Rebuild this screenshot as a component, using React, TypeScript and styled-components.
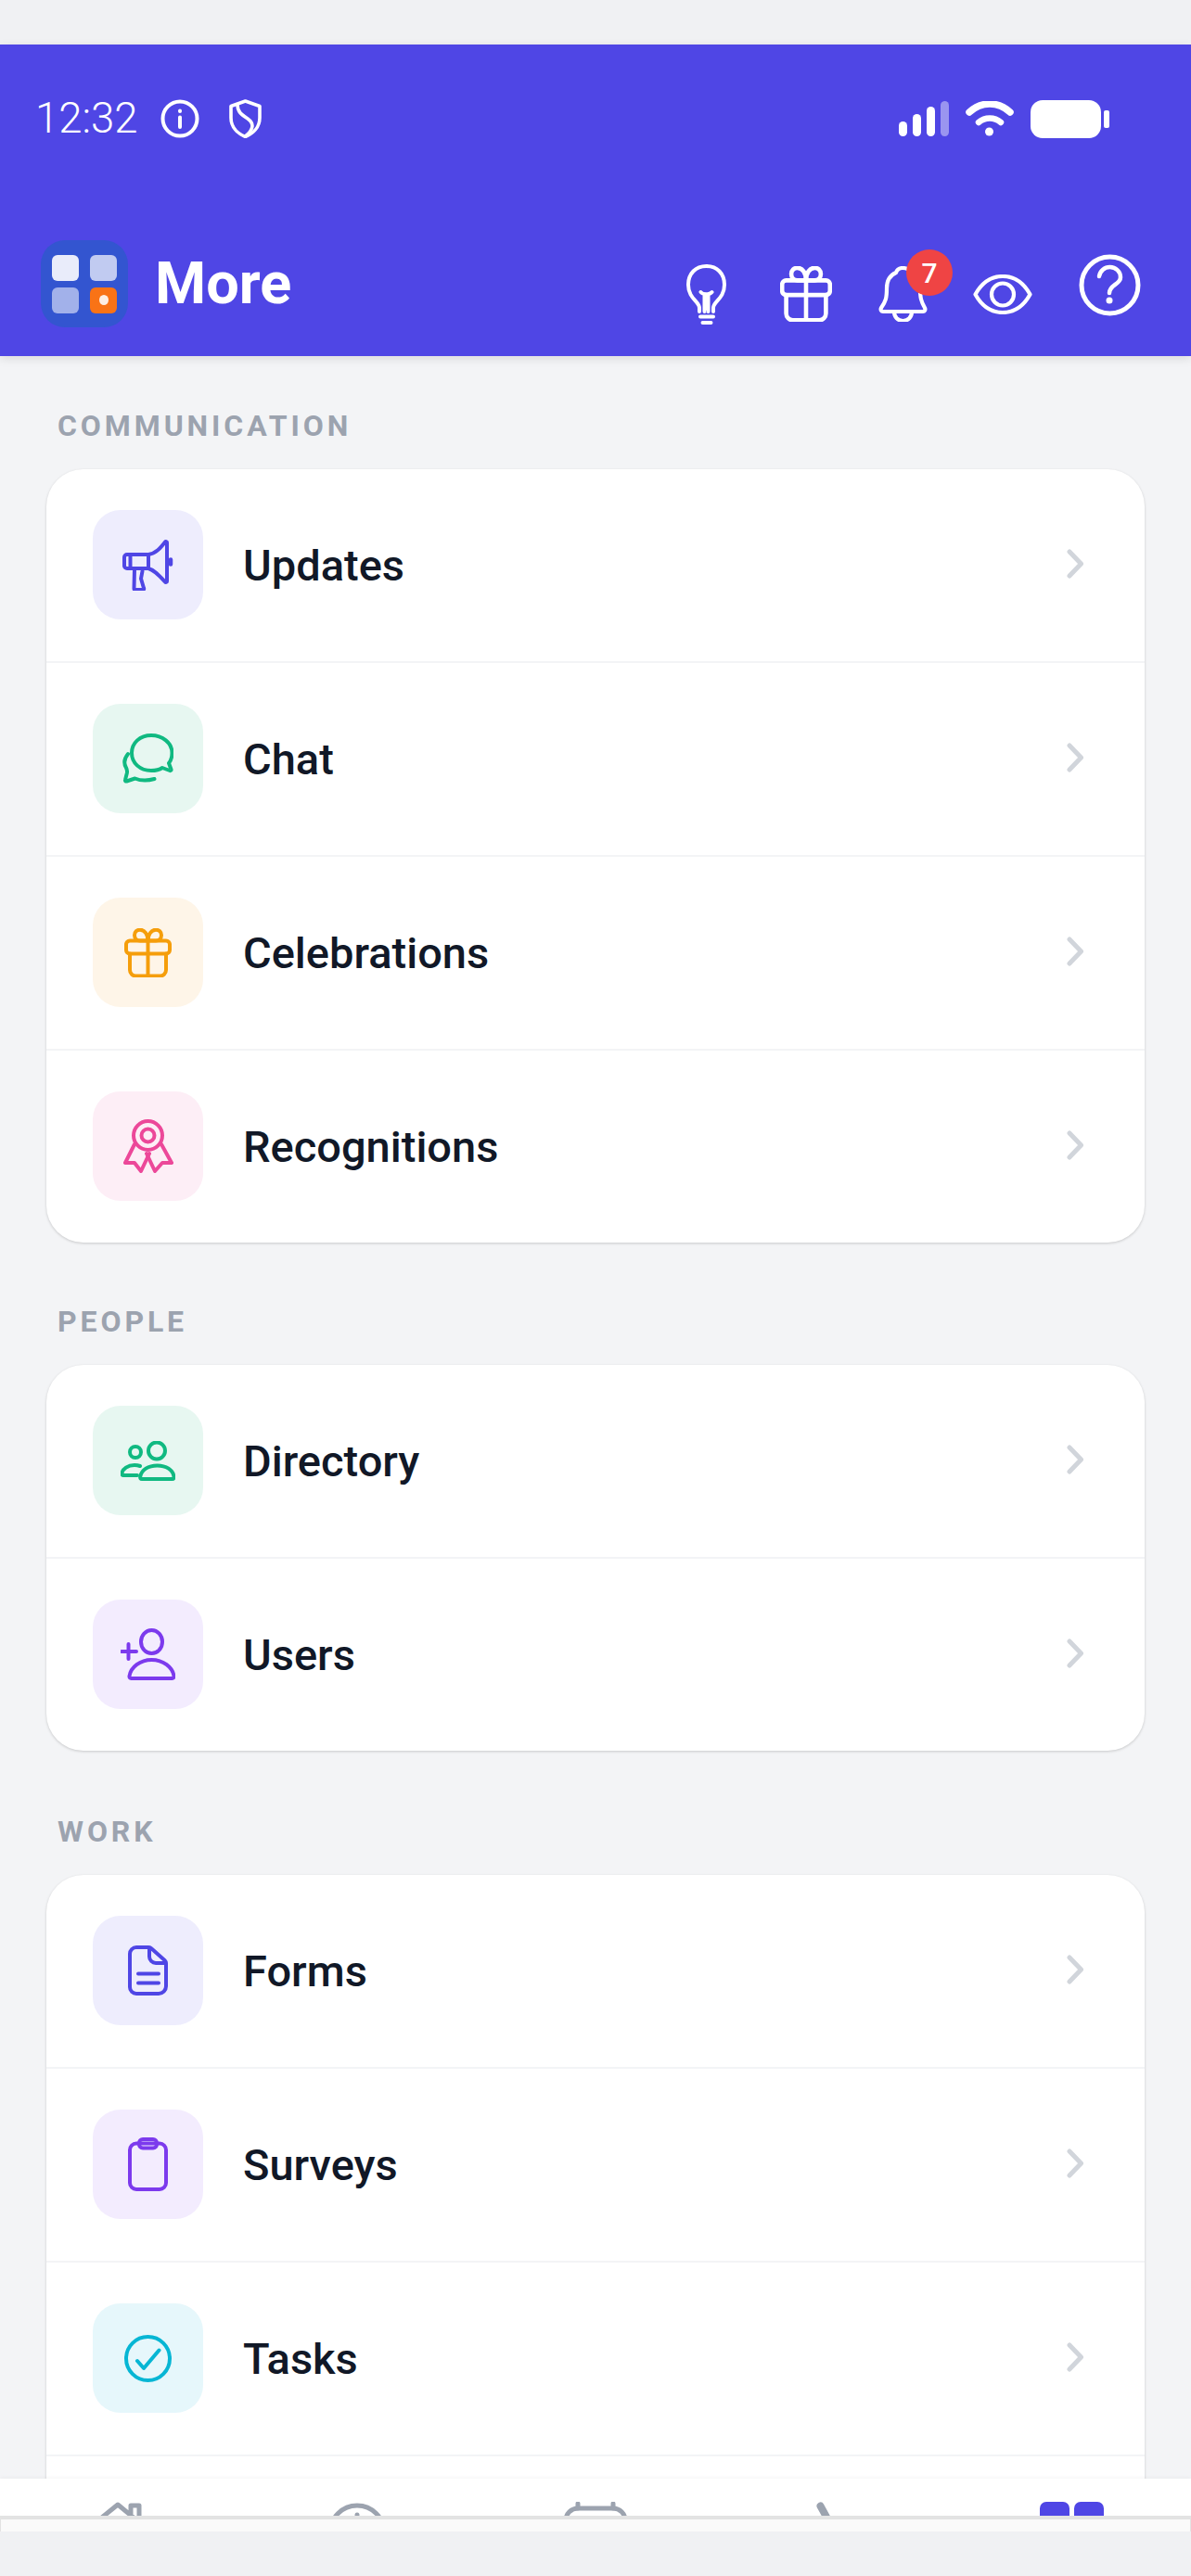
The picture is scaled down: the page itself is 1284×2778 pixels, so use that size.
import React from 'react';
import styled, {createGlobalStyle} from 'styled-components';

const Global = createGlobalStyle`
    * {
        box-sizing: border-box;
    }
    html, body {
        margin: 0;
        padding: 0;
        background: #f0f1f3;
        font-family: Roboto, "Liberation Sans", sans-serif;
    }
`

const Svg = styled.svg.attrs({fill: 'none', stroke: 'currentColor', strokeLinecap: 'round', strokeLinejoin: 'round'})`
    display: block;
    flex-shrink: 0;
`

type IconProps = { w: number; h: number; sw?: number };

const GiftIcon = ({w, h, sw = 4}: IconProps) => (
    <Svg width={w} height={h} viewBox="0 0 51 53" strokeWidth={sw} preserveAspectRatio="none">
        <rect x="2" y="13.5" width="47" height="14" rx="4"/>
        <path d="M6 27.5V45a6.5 6.5 0 0 0 6.5 6.5h26A6.5 6.5 0 0 0 45 45V27.5"/>
        <path d="M25.5 7v44.5"/>
        <path d="M25.5 13.5H17c-3.500 0-6-2.500-6-6s2.500-5.800 6-5.800c5 0 8.500 5 8.500 11.800z"/>
        <path d="M25.5 13.500H34c3.500 0 6-2.500 6-6s-2.500-5.800-6-5.800c-5 0-8.500 5-8.500 11.800z"/>
    </Svg>
);

const MegaphoneIcon = () => (
    <Svg width={55} height={55} viewBox="0 0 55 55" strokeWidth={4}>
        <path d="M28 16c8-1 13-7 18-13.500.6-.8 2-.4 2 .6v41.800c0 1-1.400 1.400-2 .6C40 39 35 33 28 31z"/>
        <path d="M5 16h23v15H5a3 3 0 0 1-3-3v-9a3 3 0 0 1 3-3zM8.500 16v15"/>
        <path d="M13 32l-.5 20.500c0 1 .6 1.500 1.500 1.500h8c1 0 1.500-.8 1-1.800L20 42l1.500-8"/>
        <path d="M1 21.500v5M52 21.500v5" strokeWidth={4.5}/>
    </Svg>
);

const ChatIcon = () => (
    <Svg width={55} height={54} viewBox="0 0 55 54" strokeWidth={4}>
        <path d="M31 2C19 2 10 10 10 21c0 11 9 19 21 19 5 0 9-1 12-3l8 3c1 .4 1.800-.4 1.500-1.300L50 32c2.500-3 3.500-7 3.500-11C53.500 10 43 2 31 2z"/>
        <path d="M6 22c-4 5-5 10-2 15 1 2 1.500 3 .8 6l-1.800 7c-.3 1 .5 1.800 1.500 1.500l9-3c6 2.500 14 2.500 21 .5"/>
    </Svg>
);

const RosetteIcon = () => (
    <Svg width={54} height={58} viewBox="0 0 54 58" strokeWidth={4}>
        <circle cx="26.500" cy="17.500" r="15.500"/>
        <circle cx="26.500" cy="17.500" r="7"/>
        <path d="M12 27L2 47h10l7 9 9-19"/>
        <path d="M41 27l11 20H42l-8 9-9-19"/>
    </Svg>
);

const PeopleIcon = () => (
    <Svg width={59} height={43} viewBox="0 0 59 43" strokeWidth={4}>
        <circle cx="39" cy="10.500" r="9"/>
        <circle cx="16" cy="12" r="6"/>
        <path d="M23 41c-1.500 0-2-1-1.800-2.500C22.500 31 30 26.500 39.500 26.500S56.500 31 57.500 38.500c.2 1.500-.3 2.500-1.800 2.500z"/>
        <path d="M21 27c-2-.7-4-1-6-1C8 26 2 30 1.500 35c-.2 1.400.3 2 1.500 2h15"/>
    </Svg>
);

const UserPlusIcon = () => (
    <Svg width={59} height={56} viewBox="0 0 59 56" strokeWidth={4}>
        <ellipse cx="33.500" cy="14.500" rx="11.500" ry="12.500"/>
        <path d="M11.500 54c-1.500 0-2.200-1-2-2.500C11 42 21 34 33.500 34S56 42 57.500 51.500c.2 1.500-.5 2.500-2 2.500z"/>
        <path d="M8.500 17v16M1 25h16"/>
    </Svg>
);

const DocIcon = () => (
    <Svg width={43} height={54} viewBox="0 0 43 54" strokeWidth={4}>
        <path d="M9 2h13c1.500 0 2.500.5 3.500 1.500L39.500 16c1 1 1.500 2 1.500 3.500V44a8 8 0 0 1-8 8H9a7 7 0 0 1-7-7V9a7 7 0 0 1 7-7z"/>
        <path d="M23 2.500V12a7 7 0 0 0 7 7h10.500"/>
        <path d="M11 30.500h22M11 40.500h22"/>
    </Svg>
);

const ClipboardIcon = () => (
    <Svg width={43} height={58} viewBox="0 0 43 58" strokeWidth={4}>
        <rect x="2" y="6.500" width="39" height="49.500" rx="7"/>
        <rect x="12" y="2" width="19" height="9.500" rx="4"/>
    </Svg>
);

const CheckCircleIcon = () => (
    <Svg width={51} height={51} viewBox="0 0 51 51" strokeWidth={4}>
        <circle cx="25.500" cy="25.500" r="23.500"/>
        <path d="M14 28l7 8 16.500-19.500"/>
    </Svg>
);

const Chevron = () => (
    <Svg width={18} height={32} viewBox="0 0 18 32" strokeWidth={5}>
        <path d="M3 3l12.500 13L3 29"/>
    </Svg>
);

const sections = [
    {
        title: 'COMMUNICATION',
        rows: [
            {label: 'Updates', bg: '#eeedfd', color: '#4f46e5', icon: <MegaphoneIcon/>},
            {label: 'Chat', bg: '#e7f7f1', color: '#10b981', icon: <ChatIcon/>},
            {label: 'Celebrations', bg: '#fef5e8', color: '#f59e0b', icon: <GiftIcon w={51} h={53}/>},
            {label: 'Recognitions', bg: '#fdeef6', color: '#ec4899', icon: <RosetteIcon/>},
        ],
    },
    {
        title: 'PEOPLE',
        rows: [
            {label: 'Directory', bg: '#e7f7f1', color: '#10b981', icon: <PeopleIcon/>},
            {label: 'Users', bg: '#f3ecfe', color: '#7c3aed', icon: <UserPlusIcon/>},
        ],
    },
    {
        title: 'WORK',
        rows: [
            {label: 'Forms', bg: '#eeedfd', color: '#4f46e5', icon: <DocIcon/>},
            {label: 'Surveys', bg: '#f3ecfe', color: '#7c3aed', icon: <ClipboardIcon/>},
            {label: 'Tasks', bg: '#e6f7fb', color: '#06b6d4', icon: <CheckCircleIcon/>},
        ],
    },
];

const App = () => {
    return (
        <Screen>
            <Global/>
            <TopGap/>
            <Header>
                <StatusBar>
                    <StatusLeft>
                        <Time>12:32</Time>
                        <Svg width={42} height={42} viewBox="0 0 42 42" strokeWidth={4}>
                            <circle cx="21" cy="21" r="18.500"/>
                            <path d="M21 19.500V30M21 12.500v.5"/>
                        </Svg>
                        <Svg width={35} height={42} viewBox="0 0 35 42" strokeWidth={3.6}>
                            <path d="M17.500 2L33 7.500V20c0 10-7 17-15.500 20.500C9 37 2 30 2 20V7.500z"/>
                            <path d="M9 6c0 8 5 11 11 15 7 5 7 11-2.500 19"/>
                        </Svg>
                    </StatusLeft>
                    <StatusRight>
                        <Signal>
                            <SignalBar $h={16}/>
                            <SignalBar $h={24}/>
                            <SignalBar $h={32}/>
                            <SignalBar $h={38} $dim/>
                        </Signal>
                        <Svg width={52} height={38} viewBox="0 0 52 38" strokeWidth={7.500}>
                            <path d="M4 12C17 0 35 0 48 12"/>
                            <path d="M14 23c7-6 17-6 24 0" strokeWidth={6.500}/>
                            <circle cx="25.500" cy="33" r="4.500" fill="currentColor" stroke="none"/>
                        </Svg>
                        <Battery>
                            <BatteryNub/>
                        </Battery>
                    </StatusRight>
                </StatusBar>
                <Toolbar>
                    <Logo>
                        <LogoSquare $bg="#e9ecfa"/>
                        <LogoSquare $bg="#c1cbf1"/>
                        <LogoSquare $bg="#a2b1ea"/>
                        <LogoSquare $bg="#f97316"><LogoDot/></LogoSquare>
                    </Logo>
                    <Title>More</Title>
                    <Actions>
                        <BulbSlot>
                            <Svg width={43} height={65} viewBox="0 0 43 65" strokeWidth={4}>
                                <path d="M14 51v-4C14 40 2 37 2 22 2 10 10 2 21.500 2S41 10 41 22c0 15-12 18-12 25v4"/>
                                <path d="M15.500 30c2 3 9.500 3 12 0M19.500 33v18M23.500 33v18"/>
                                <path d="M15 56.500h14M17.500 63h9" strokeWidth={4}/>
                            </Svg>
                        </BulbSlot>
                        <GiftIcon w={56} h={60} sw={4.2}/>
                        <BellSlot>
                            <Svg width={53} height={60} viewBox="0 0 53 60" strokeWidth={4.2}>
                                <path d="M26 2c-4 0-6 2-7 5C12 10 9 15 9 24c0 10-1 14-6 21-1 2 0 4 2 4h43c2 0 3-2 2-4-4-7-5-11-5-21 0-9-3-14-10-17-1-3-4-5-9-5z"/>
                                <path d="M17 49c0 6 4 10 9.500 10S36 55 36 49"/>
                            </Svg>
                            <Badge>7</Badge>
                        </BellSlot>
                        <Svg width={64} height={43} viewBox="0 0 64 43" strokeWidth={4.2}>
                            <path d="M2.500 21.500C10 8 20 2 32 2s22 6 29.500 19.500C54 35 44 41 32 41S10 35 2.500 21.500z"/>
                            <circle cx="32" cy="21.500" r="12"/>
                        </Svg>
                        <HelpSlot>
                            <Svg width={67} height={67} viewBox="0 0 67 67" strokeWidth={5}>
                                <circle cx="33.500" cy="33.500" r="30.500"/>
                                <path d="M22 24c1-6 6-10 11.500-10C40 14 45 19 45 25c0 8-12 8-12 17" strokeWidth={4.500}/>
                                <circle cx="33" cy="50" r="3.500" fill="currentColor" stroke="none"/>
                            </Svg>
                        </HelpSlot>
                    </Actions>
                </Toolbar>
            </Header>
            <Content>
                {sections.map((section) => (
                    <Section key={section.title}>
                        <SectionLabel>{section.title}</SectionLabel>
                        <Card>
                            {section.rows.map((row) => (
                                <Row key={row.label}>
                                    <IconTile $bg={row.bg} $color={row.color}>{row.icon}</IconTile>
                                    <RowLabel>{row.label}</RowLabel>
                                    <ChevronWrap><Chevron/></ChevronWrap>
                                </Row>
                            ))}
                            {section.title === 'WORK' && <Row/>}
                        </Card>
                    </Section>
                ))}
            </Content>
            <BottomNav>
                <NavItem>
                    <Svg width={60} height={40} viewBox="0 0 60 40" strokeWidth={5}>
                        <path d="M8 20L29 3l17 14M43 15V4h9v12"/>
                    </Svg>
                </NavItem>
                <NavItem>
                    <Svg width={62} height={40} viewBox="0 0 62 40" strokeWidth={5}>
                        <circle cx="31" cy="33" r="29"/>
                        <path d="M31 14v6"/>
                    </Svg>
                </NavItem>
                <NavItem>
                    <Svg width={70} height={40} viewBox="0 0 70 40" strokeWidth={5}>
                        <rect x="3" y="7" width="64" height="60" rx="13"/>
                        <path d="M16 2v5M54 2v5"/>
                    </Svg>
                </NavItem>
                <NavItem>
                    <Svg width={60} height={40} viewBox="0 0 60 40" strokeWidth={8}>
                        <path d="M15.500 4.500L24 20"/>
                    </Svg>
                </NavItem>
                <NavItem>
                    <ActiveTile/>
                    <ActiveTile/>
                </NavItem>
            </BottomNav>
            <NavEdge/>
            <BottomGap/>
        </Screen>
    );
};

export default App;

const Screen = styled.div`
    display: flex;
    flex-direction: column;
    width: 1284px;
    height: 2778px;
    overflow: hidden;
    background: #f0f1f3;
`
const TopGap = styled.div`
    height: 48px;
    flex-shrink: 0;
`
const Header = styled.header`
    position: relative;
    z-index: 2;
    flex-shrink: 0;
    height: 336px;
    padding-top: 58px;
    background: #4f46e5;
    color: #ffffff;
    box-shadow: 0 3px 10px rgba(0, 0, 0, 0.1);
`
const StatusBar = styled.div`
    display: flex;
    justify-content: space-between;
    align-items: center;
    height: 44px;
    padding: 0 88px 0 38px;
`
const StatusLeft = styled.div`
    display: flex;
    align-items: center;
    gap: 32px;
`
const Time = styled.span`
    margin-right: -8px;
    font-size: 45.5px;
    font-weight: 300;
    line-height: 44px;
`
const StatusRight = styled.div`
    display: flex;
    align-items: center;
    gap: 18px;
`
const Signal = styled.div`
    display: flex;
    align-items: flex-end;
    gap: 6px;
    height: 38px;
`
const SignalBar = styled.span<{ $h: number; $dim?: boolean }>`
    width: 9px;
    height: ${(p) => p.$h}px;
    border-radius: 5px;
    background: ${(p) => (p.$dim ? '#9a95f0' : '#ffffff')};
`
const Battery = styled.div`
    position: relative;
    width: 76px;
    height: 41px;
    border-radius: 13px;
    background: #ffffff;
    margin-right: 9px;
`
const BatteryNub = styled.span`
    position: absolute;
    top: 11px;
    right: -9px;
    width: 6px;
    height: 19px;
    border-radius: 2px;
    background: #ffffff;
`
const Toolbar = styled.div`
    display: flex;
    align-items: center;
    height: 94px;
    margin-top: 109px;
    padding: 0 54px 0 44px;
`
const Logo = styled.div`
    display: grid;
    grid-template-columns: 29px 29px;
    grid-template-rows: 28px 28px;
    column-gap: 12px;
    row-gap: 7px;
    justify-content: center;
    align-content: center;
    width: 94px;
    height: 94px;
    border-radius: 26px;
    background: #3355d0;
`
const LogoSquare = styled.span<{ $bg: string }>`
    display: flex;
    align-items: center;
    justify-content: center;
    border-radius: 6px;
    background: ${(p) => p.$bg};
`
const LogoDot = styled.span`
    width: 10px;
    height: 11px;
    border-radius: 50%;
    background: #fdeee3;
`
const Title = styled.h1`
    margin: 0 0 0 29px;
    font-size: 63px;
    font-weight: 700;
    line-height: 70px;
`
const Actions = styled.div`
    display: flex;
    align-items: center;
    gap: 50px;
    margin-left: auto;
    padding-top: 22px;
`
const BulbSlot = styled.div`
    margin-right: 8px;
`
const BellSlot = styled.div`
    position: relative;
    margin-right: -1px;
`
const Badge = styled.span`
    position: absolute;
    top: -18px;
    left: 30px;
    display: flex;
    align-items: center;
    justify-content: center;
    width: 50px;
    height: 50px;
    border-radius: 50%;
    background: #ef4444;
    color: #ffffff;
    font-size: 30px;
    font-weight: 500;
`
const HelpSlot = styled.div`
    margin-top: -19px;
`
const Content = styled.main`
    flex: 1;
    min-height: 0;
    overflow: hidden;
    padding: 55px 50px 0;
    background: #f3f4f6;
`
const Section = styled.section`
    margin-bottom: 65px;

    &:nth-child(2) {
        margin-bottom: 67px;
    }
`
const SectionLabel = styled.h2`
    margin: 0 0 27px 12px;
    color: #9ca3af;
    font-size: 32px;
    font-weight: 700;
    line-height: 40px;
    letter-spacing: 3.9px;
`
const Card = styled.div`
    overflow: hidden;
    border-radius: 40px;
    background: #ffffff;
    box-shadow: 0 1px 3px rgba(0, 0, 0, 0.18);
`
const Row = styled.div`
    display: flex;
    align-items: center;
    height: 209px;
    padding: 0 66px 0 50px;
    border-bottom: 2px solid #f3f4f6;

    &:last-child {
        height: 207px;
        border-bottom: none;
    }
`
const IconTile = styled.div<{ $bg: string; $color: string }>`
    display: flex;
    align-items: center;
    justify-content: center;
    width: 119px;
    height: 118px;
    margin-top: -1px;
    border-radius: 30px;
    background: ${(p) => p.$bg};
    color: ${(p) => p.$color};
`
const RowLabel = styled.span`
    margin-left: 43px;
    color: #111827;
    font-size: 47px;
    font-weight: 500;
`
const ChevronWrap = styled.span`
    margin-left: auto;
    color: #d1d5db;
    margin-top: -3px;
`
const BottomNav = styled.nav`
    position: relative;
    z-index: 2;
    display: grid;
    grid-template-columns: repeat(5, 1fr);
    flex-shrink: 0;
    height: 40px;
    overflow: hidden;
    background: #ffffff;
    box-shadow: 0 -2px 4px rgba(0, 0, 0, 0.03);
    color: #9ca3af;
`
const NavItem = styled.div`
    display: flex;
    justify-content: center;
    gap: 5px;
    padding-top: 25px;
`
const ActiveTile = styled.span`
    width: 32px;
    height: 40px;
    border-radius: 7px;
    background: #4f46e5;
`
const NavEdge = styled.div`
    position: relative;
    z-index: 2;
    flex-shrink: 0;
    height: 17px;
    border-top: 4px solid #e3e3e3;
    border-left: 1px solid #e3e3e3;
    border-right: 1px solid #e3e3e3;
    background: #fafafa;
`
const BottomGap = styled.div`
    flex-shrink: 0;
    height: 48px;
`
